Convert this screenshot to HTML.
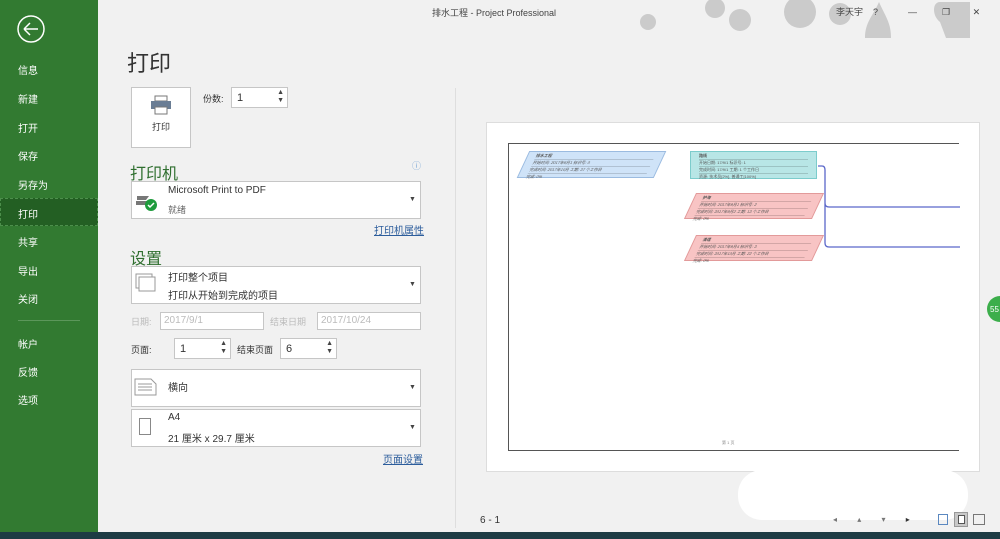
<!DOCTYPE html>
<html><head><meta charset="utf-8"><style>
*{margin:0;padding:0;box-sizing:border-box}
body{width:1000px;height:539px;overflow:hidden;background:#f1f1f1;font-family:"Liberation Sans","Noto Sans CJK SC",sans-serif;position:relative;font-size:11px;color:#333}
.a{position:absolute}
.side{left:0;top:0;width:98px;height:532px;background:#327a31}
.side div{position:absolute;left:18px;color:#fff;font-size:10px}
.sel{left:0;top:198px;width:98px;height:28px;background:#235f23;border:1px dashed #4d8f4c}
.box{background:#fff;border:1px solid #c6c6c6}
.arr{font-size:7px;color:#444}
.lnk{color:#2c5d9c;text-decoration:underline;font-size:10px}
.g{color:#2f6f2f;font-size:16px}
.card{position:absolute;font-size:4px;line-height:6px;padding:1px 8px;color:#555}
.card i{display:block;font-style:normal;border-top:1px solid rgba(0,0,0,.15);white-space:nowrap}
</style></head><body>
<div class="a side"></div>
<div class="a sel"></div>
<div class="a side" style="background:none">
<svg class="a" style="left:16px;top:14px" width="30" height="30"><circle cx="15" cy="15" r="13" fill="none" stroke="#fff" stroke-width="1.5"/><path d="M8 15h14M8 15l6-6M8 15l6 6" stroke="#fff" stroke-width="1.5" fill="none"/></svg>
<div style="top:62px">信息</div><div style="top:91px">新建</div><div style="top:120px">打开</div><div style="top:148px">保存</div><div style="top:177px">另存为</div><div style="top:206px">打印</div><div style="top:234px">共享</div><div style="top:263px">导出</div><div style="top:291px">关闭</div>
<div style="top:320px;left:18px;width:62px;height:1px;background:#5c975b"></div>
<div style="top:336px">帐户</div><div style="top:364px">反馈</div><div style="top:392px">选项</div>
</div>
<div class="a" style="left:0;top:532px;width:1000px;height:7px;background:#1d3c44"></div>
<svg class="a" style="left:630px;top:0" width="340" height="40" fill="#cbcbcb"><circle cx="18" cy="22" r="8"/><circle cx="85" cy="8" r="10"/><circle cx="110" cy="20" r="11"/><circle cx="170" cy="12" r="16"/><circle cx="210" cy="14" r="11"/><path d="M235 38c0-16 8-22 14-36 6 14 12 20 12 36z"/><path d="M340 2h-30c-8 0-8 14 0 20l6 16h24z"/></svg>
<div class="a" style="left:432px;top:6px;font-size:9px;color:#444">排水工程 - Project Professional</div>
<div class="a" style="left:836px;top:5px;font-size:9px;color:#444">李天宇 &nbsp; &nbsp;?&nbsp; &nbsp; &nbsp; &nbsp; &nbsp; &nbsp; —&nbsp; &nbsp; &nbsp; &nbsp; &nbsp; ❐ &nbsp; &nbsp; &nbsp; &nbsp; ✕</div>
<div class="a" style="left:127px;top:46px;font-size:22px;color:#333">打印</div>
<div class="a box" style="left:131px;top:87px;width:60px;height:61px"></div>
<svg class="a" style="left:150px;top:95px" width="22" height="20"><rect x="5" y="1" width="12" height="5" fill="#fff" stroke="#777"/><rect x="1" y="6" width="20" height="8" fill="#6a7d94"/><rect x="5" y="12" width="12" height="7" fill="#fff" stroke="#777"/></svg>
<div class="a" style="left:152px;top:120px;font-size:9px">打印</div>
<div class="a" style="left:203px;top:92px;font-size:9px">份数:</div>
<div class="a box" style="left:231px;top:87px;width:57px;height:21px;padding:4px 5px">1<span class="a arr" style="right:3px;top:1px;line-height:8px">▲<br>▼</span></div>
<div class="a g" style="left:130px;top:160px">打印机</div>
<div class="a" style="left:412px;top:159px;color:#7aa6d6;font-size:9px">ⓘ</div>
<div class="a box" style="left:131px;top:181px;width:290px;height:38px"></div>
<svg class="a" style="left:135px;top:192px" width="24" height="20"><path d="M2 4h12l-3 4H2zM1 9h12l-3 4H1z" fill="#777"/><circle cx="16" cy="13" r="6" fill="#1e9b3c"/><path d="M13 13l2 2 4-4" stroke="#fff" stroke-width="1.5" fill="none"/></svg>
<div class="a" style="left:168px;top:185px;font-size:10px;color:#333">Microsoft Print to PDF</div>
<div class="a" style="left:168px;top:203px;font-size:9px;color:#666">就绪</div>
<div class="a arr" style="left:409px;top:196px">▼</div>
<div class="a lnk" style="left:374px;top:222px">打印机属性</div>
<div class="a g" style="left:130px;top:245px">设置</div>
<div class="a box" style="left:131px;top:266px;width:290px;height:38px"></div>
<svg class="a" style="left:134px;top:272px" width="24" height="24" fill="none" stroke="#999"><rect x="2" y="2" width="16" height="14"/><rect x="5" y="5" width="16" height="14" fill="#fff"/></svg>
<div class="a" style="left:168px;top:269px;font-size:10px">打印整个项目</div>
<div class="a" style="left:168px;top:287px;font-size:10px">打印从开始到完成的项目</div>
<div class="a arr" style="left:409px;top:281px">▼</div>
<div class="a" style="left:131px;top:315px;font-size:9px;color:#bbb">日期:</div>
<div class="a box" style="left:160px;top:312px;width:104px;height:18px;padding:2px 3px;color:#bbb;font-size:10px">2017/9/1</div>
<div class="a" style="left:270px;top:315px;font-size:9px;color:#bbb">结束日期</div>
<div class="a box" style="left:317px;top:312px;width:104px;height:18px;padding:2px 3px;color:#bbb;font-size:10px">2017/10/24</div>
<div class="a" style="left:131px;top:343px;font-size:9px">页面:</div>
<div class="a box" style="left:174px;top:338px;width:57px;height:21px;padding:4px 5px">1<span class="a arr" style="right:3px;top:1px;line-height:8px">▲<br>▼</span></div>
<div class="a" style="left:237px;top:343px;font-size:9px">结束页面</div>
<div class="a box" style="left:280px;top:338px;width:57px;height:21px;padding:4px 5px">6<span class="a arr" style="right:3px;top:1px;line-height:8px">▲<br>▼</span></div>
<div class="a box" style="left:131px;top:369px;width:290px;height:38px"></div>
<svg class="a" style="left:134px;top:378px" width="24" height="18" fill="none" stroke="#999"><path d="M1 1h16l5 5v11H1z"/><path d="M4 6h14M4 9h14M4 12h14" /></svg>
<div class="a" style="left:168px;top:379px;font-size:10px">横向</div>
<div class="a arr" style="left:409px;top:384px">▼</div>
<div class="a box" style="left:131px;top:409px;width:290px;height:38px"></div>
<div class="a" style="left:139px;top:418px;width:12px;height:17px;border:1px solid #888;background:#fff"></div>
<div class="a" style="left:168px;top:412px;font-size:10px">A4</div>
<div class="a" style="left:168px;top:430px;font-size:10px">21 厘米 x 29.7 厘米</div>
<div class="a arr" style="left:409px;top:424px">▼</div>
<div class="a lnk" style="left:383px;top:451px">页面设置</div>
<div class="a" style="left:455px;top:88px;width:1px;height:440px;background:#dedede"></div>
<div class="a" style="left:486px;top:122px;width:494px;height:350px;background:#fff;border:1px solid #ddd"></div>
<div class="a" style="left:508px;top:143px;width:451px;height:308px;border-top:1px solid #555;border-left:1px solid #555;border-bottom:1px solid #555"></div>
<div class="card" style="left:523px;top:151px;width:137px;height:27px;background:#cfe3f8;border:1px solid #9bbbe0;transform:skewX(-25deg)"><b>排水工程</b><i>开始时间: 2017年9月1 标识号: 0</i><i>完成时间: 2017年10月 工期: 37 个工作日</i><i>完成: 0%</i></div>
<div class="card" style="left:690px;top:151px;width:127px;height:28px;background:#b8e6e6;border:1px solid #7ccccc"><b>路线</b><i>开始日期: 17/9/1 标识号: 1</i><i>完成时间: 17/9/1 工期: 1 个工作日</i><i>资源: 技术员[2%], 普通工[100%]</i></div>
<div class="card" style="left:690px;top:193px;width:128px;height:26px;background:#f8c4c4;border:1px solid #e29a9a;transform:skewX(-25deg)"><b>护海</b><i>开始时间: 2017年9月1 标识号: 2</i><i>完成时间: 2017年9月2 工期: 13 个工作日</i><i>完成: 0%</i></div>
<div class="card" style="left:690px;top:235px;width:128px;height:26px;background:#f8c4c4;border:1px solid #e29a9a;transform:skewX(-25deg)"><b>清理</b><i>开始时间: 2017年9月4 标识号: 3</i><i>完成时间: 2017年10月 工期: 22 个工作日</i><i>完成: 0%</i></div>
<svg class="a" style="left:816px;top:160px" width="144" height="90" fill="none" stroke="#5a67c9" stroke-width="1.3"><path d="M2 6h4q3 0 3 4v33q0 4 4 4h131M9 43v40q0 4 4 4h131"/></svg>
<div class="a" style="left:722px;top:440px;font-size:4px;color:#888">第 1 页</div>
<div class="a" style="left:738px;top:470px;width:230px;height:50px;background:#fff;border-radius:24px"></div>
<div class="a" style="left:987px;top:296px;width:26px;height:26px;border-radius:50%;background:#3cae4b;color:#fff;font-size:8px;padding:9px 0 0 3px">55</div>
<div class="a" style="left:480px;top:515px;font-size:10px">6 - 1</div>
<div class="a" style="left:833px;top:515px;font-size:8px;color:#777;word-spacing:18px">◂ ▴ ▾ <span style="color:#333">▸</span></div>
<div class="a" style="left:938px;top:514px;width:10px;height:11px;border:1px solid #5b88c0"></div>
<div class="a" style="left:954px;top:512px;width:14px;height:15px;background:#c8c8c8;border:1px solid #999"></div>
<div class="a" style="left:958px;top:515px;width:7px;height:9px;border:1px solid #555;background:#fff"></div>
<div class="a" style="left:973px;top:514px;width:12px;height:11px;border:1px solid #777"></div>
</body></html>
